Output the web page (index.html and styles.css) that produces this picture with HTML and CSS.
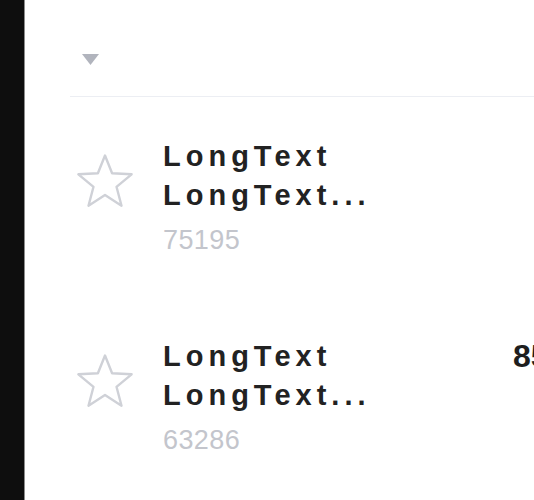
FILE: index.html
```html
<!DOCTYPE html>
<html lang="en">
  <head>
    <meta charset="UTF-8" />
    <meta name="viewport" content="width=device-width, initial-scale=1.0" />
    <title>List</title>
    <link rel="stylesheet" href="styles.css">
  </head>
  <body>
    <div class="rail"></div>
    <div class="main">
      <div class="toolbar">
        <svg class="caret" width="17" height="11" viewBox="0 0 17 11">
          <polygon points="0,0 17,0 8.5,11" fill="#b1b4bd" />
        </svg>
      </div>

      <div class="list">
        <div class="row">
          <svg class="star" width="56" height="54" viewBox="0 0 56 54">
            <polygon points="28,1.5 35.1,19.3 54.6,20.3 39.5,32.8 44.5,51.7 28,41 11.5,51.7 16.5,32.8 1.4,20.3 20.9,19.3" />
          </svg>
          <div class="info">
            <div class="title">LongText LongText...</div>
            <div class="code">75195</div>
          </div>
        </div>

        <div class="row">
          <svg class="star" width="56" height="54" viewBox="0 0 56 54">
            <polygon points="28,1.5 35.1,19.3 54.6,20.3 39.5,32.8 44.5,51.7 28,41 11.5,51.7 16.5,32.8 1.4,20.3 20.9,19.3" />
          </svg>
          <div class="info">
            <div class="title">LongText LongText...</div>
            <div class="code">63286</div>
          </div>
          <div class="price">85.00</div>
        </div>
      </div>
    </div>
  </body>
</html>
```

FILE: styles.css
```css
body {
  margin: 0;
  padding: 0;
  display: flex;
  height: 500px;
  overflow: hidden;
  background: #fff;
  font-family: "Liberation Sans", Arial, sans-serif;
  color: #222;
}

.rail {
  flex: 0 0 24px;
  background: #0e0e0e;
  border-right: 1px solid #8c8c8c;
}

.main {
  flex: 1;
  min-width: 0;
  padding-left: 45px;
}

.toolbar {
  height: 97px;
  box-sizing: border-box;
  border-bottom: 1px solid #eceef3;
  padding: 54px 0 0 12px;
}

.caret {
  display: block;
}

.list {
  padding-top: 40px;
}

.row {
  display: flex;
  height: 200px;
  padding-left: 7px;
}

.star {
  flex: 0 0 56px;
  margin-top: 17px;
  fill: none;
  stroke: #cfd1d7;
  stroke-width: 2.4;
  stroke-linejoin: round;
}

.info {
  flex: 0 0 380px;
  padding-left: 30px;
  box-sizing: border-box;
}

.title {
  width: 230px;
  font-size: 29px;
  line-height: 39px;
  font-weight: bold;
  letter-spacing: 5px;
}

.code {
  margin-top: 10px;
  font-size: 27px;
  line-height: 30px;
  color: #c3c5cc;
  letter-spacing: 0.4px;
}

.price {
  flex-shrink: 0;
  white-space: nowrap;
  margin-top: 3px;
  font-size: 32px;
  line-height: 32px;
  font-weight: bold;
  color: #1e1e1e;
}
```
